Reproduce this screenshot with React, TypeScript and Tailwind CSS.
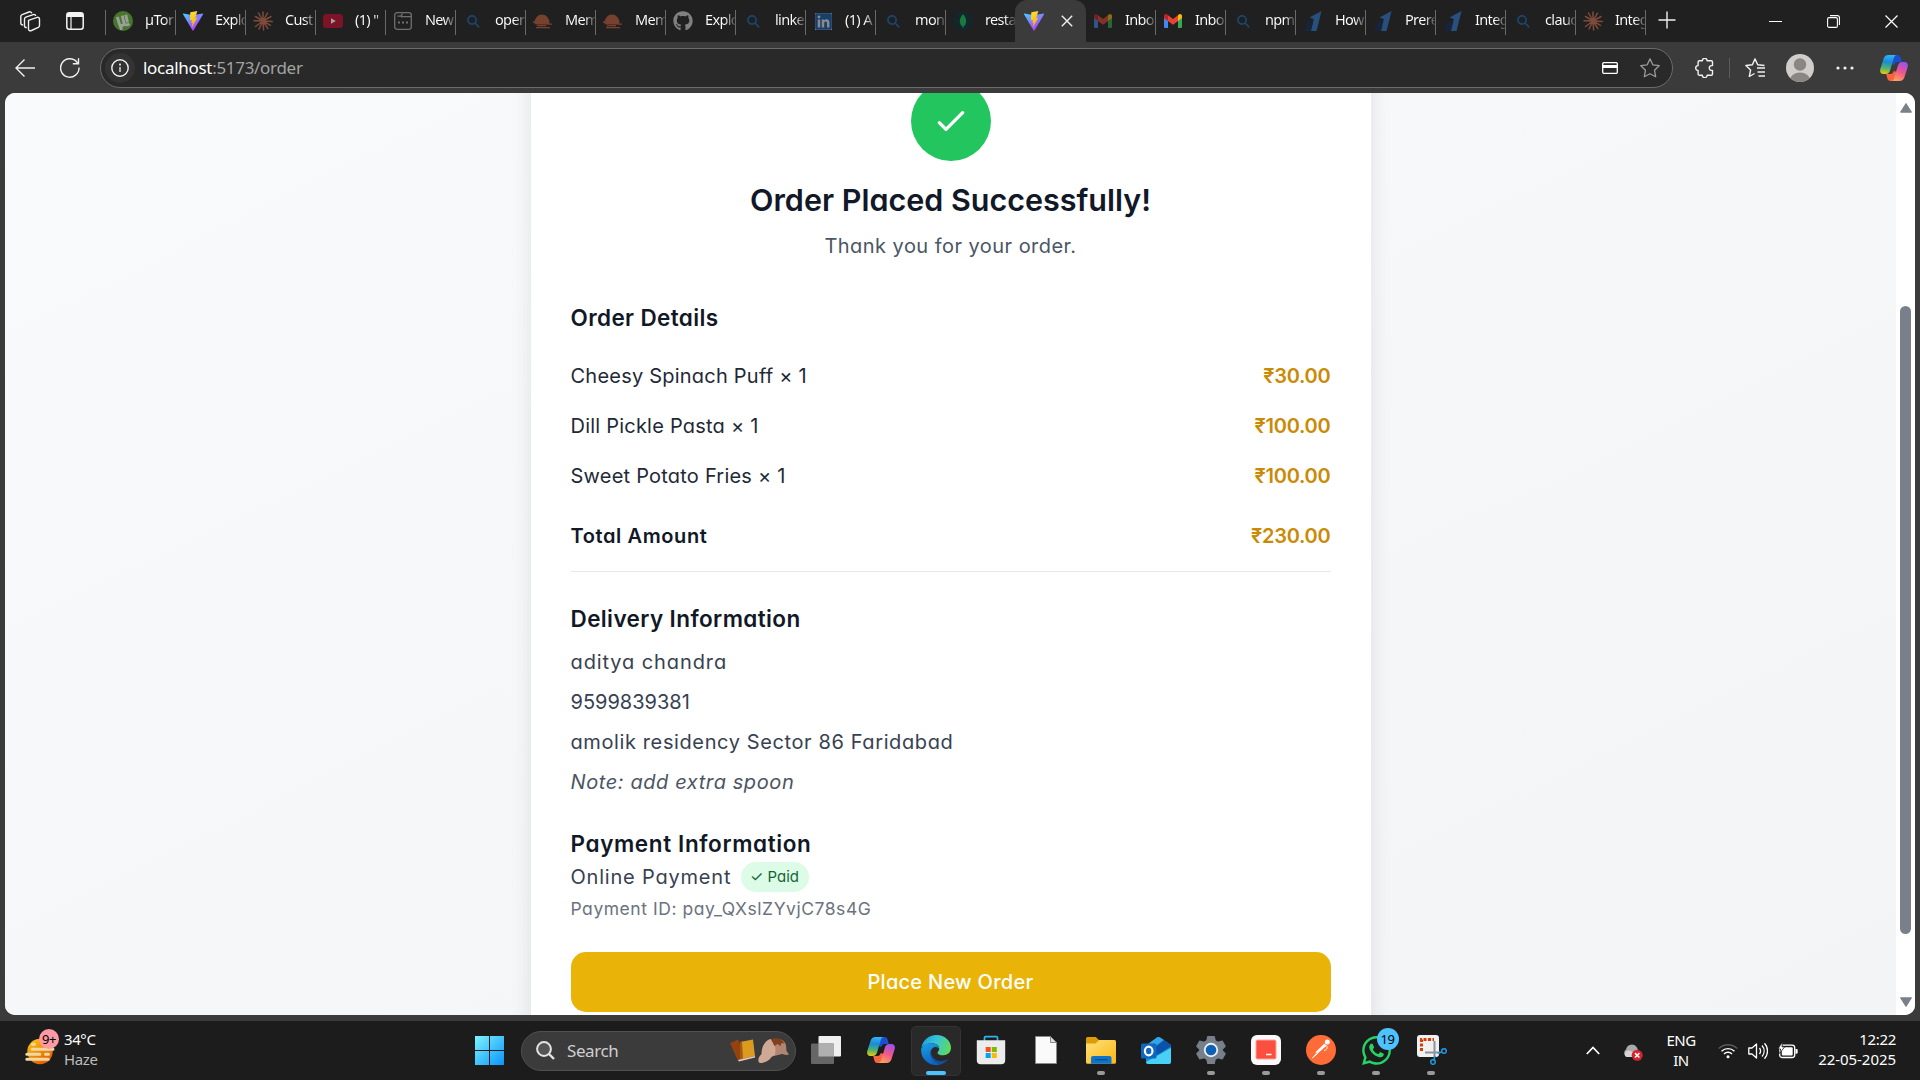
import type { ReactNode } from "react";
import { FaGithub, FaLinkedin, FaWhatsapp } from "react-icons/fa";

/* ---------- browser icons ---------- */

function ViteIcon({ id }: { id: string }) {
  return (
    <svg width="20" height="20" viewBox="0 0 20 20">
      <defs>
        <linearGradient id={`${id}-a`} x1="0" y1="0" x2="0.6" y2="1">
          <stop offset="0" stopColor="#41d1ff" />
          <stop offset="1" stopColor="#bd34fe" />
        </linearGradient>
        <linearGradient id={`${id}-b`} x1="0.4" y1="0" x2="0.6" y2="1">
          <stop offset="0" stopColor="#ffdd35" />
          <stop offset="1" stopColor="#ffa800" />
        </linearGradient>
      </defs>
      <path d="M.4 2.6 10 4.3l9.6-1.7a.5.5 0 0 1 .4.8L10.4 19.6a.5.5 0 0 1-.8 0L0 3.3a.5.5 0 0 1 .4-.7Z" fill={`url(#${id}-a)`} />
      <path d="m14.3 0-6.8 1.3a.3.3 0 0 0-.2.3L6.900 9.300l2-.3-.6 2.800 1.300-.4-.9 5.300 5.600-9.900-2.100.4Z" fill={`url(#${id}-b)`} />
    </svg>
  );
}

function TorrentIcon() {
  return (
    <svg width="20" height="20" viewBox="0 0 20 20">
      <circle cx="10" cy="10" r="10" fill="#46752b" />
      <path d="M4.300 5.800 6.500 13.200c.8 2.200 4.800 1.500 4.500-1L9.300 4.600M11 12.500c1.200 2 4 1.500 5.500.300M14.500 11.500 12.800 3.800M6.800 13.500l1.800 5.200" fill="none" stroke="#9a9f9a" strokeWidth="2.900" />
    </svg>
  );
}

function BurstIcon() {
  return (
    <svg width="20" height="20" viewBox="0 0 20 20" stroke="#7e4b3b" strokeWidth="1.500" strokeLinecap="round">
      <path d="M10 10V1M10 10l4.500-7.800M10 10l8-4.500M10 10l9.200.6M10 10l7.500 4.300M10 10l4.800 7.500M10 10l.6 9M10 10l-4 8M10 10l-7.500 5.500M10 10l-9-.2M10 10 2.500 5.500M10 10 5.500 2" />
    </svg>
  );
}

function YoutubeIcon() {
  return (
    <svg width="20" height="14" viewBox="0 0 20 14">
      <rect width="20" height="14" rx="3.500" fill="#7d1327" />
      <path d="m8 4.200 4.800 2.800L8 9.800Z" fill="#a3a3a3" />
    </svg>
  );
}

function NewsIcon() {
  return (
    <svg width="18" height="18" viewBox="0 0 18 18" fill="none" stroke="#6f6f6f" strokeWidth="1.300">
      <rect x=".7" y=".7" width="16.600" height="16.600" rx="2.500" />
      <path d="M3.500 4.200H7l1.500-2.500M7 5l1.500-.400h8.800" />
      <path d="M4 10.500h2M8 10.500h2M12 10.500h2" strokeWidth="2" />
    </svg>
  );
}

function LensIcon() {
  return (
    <svg width="13" height="13" viewBox="0 0 13 13" fill="none" stroke="#1b466c" strokeWidth="1.700">
      <circle cx="5" cy="5" r="4.100" />
      <path d="m8 8 4.300 4.300" />
    </svg>
  );
}

function SunsetIcon() {
  return (
    <svg width="20" height="16" viewBox="0 0 20 16" fill="#78402f">
      <path d="M1.500 10a7.500 8.500 0 1 1 15 0l-1 1.500H2.500Z" />
      <path d="M0 8.500h6v1.500H0zM12 10h2v1.300h-2zM15 10.500h4v1.300h-4zM4 12h9v1.200H4zM3 14h14v1.200H3z" />
    </svg>
  );
}

function LeafIcon() {
  return (
    <svg width="20" height="20" viewBox="0 0 20 20">
      <circle cx="10" cy="10" r="10" fill="#14252b" />
      <path d="M10 3c2 2.500 3.200 4.500 3.200 7 0 2.700-1.200 4.600-2.800 5.700V17h-.8v-1.300C8 14.600 6.800 12.700 6.800 10c0-2.500 1.200-4.500 3.200-7Z" fill="#177a3e" />
    </svg>
  );
}

function GmailIcon({ dim = false }: { dim?: boolean }) {
  return (
    <svg width="18" height="14" viewBox="0 0 18 14" className={dim ? "opacity-50" : ""}>
      <path d="M0 3.500v9.200c0 .7.600 1.300 1.300 1.300H4V5Z" fill="#4285f4" />
      <path d="M18 3.500v9.200c0 .7-.6 1.300-1.300 1.300H14V5Z" fill="#34a853" />
      <path d="M14 1.200V7l4-3V2.200C18 .2 15.900-.6 14.500.7Z" fill="#fbbc04" />
      <path d="M4 1.200V7L0 4V2.200C0 .2 2.100-.6 3.500.7Z" fill="#c5221f" />
      <path d="M4 7V1.200l5 3.700 5-3.700V7l-5 3.800Z" fill="#ea4335" />
    </svg>
  );
}

function OneIcon() {
  return (
    <svg width="18" height="20" viewBox="0 0 18 20">
      <path d="M5.500 6.500 17.500 0 12.500 20H7L9.800 8Z" fill="#28507f" />
      <path d="M3 11.500 9 10 6.800 20H0Z" fill="#17243a" />
    </svg>
  );
}

function CopilotIcon({ id }: { id: string }) {
  return (
    <svg width="28" height="26" viewBox="0 0 28 26">
      <defs>
        <linearGradient id={`${id}-l`} x1="0.4" y1="0" x2="0.3" y2="1">
          <stop offset="0" stopColor="#2fb4f5" />
          <stop offset=".35" stopColor="#1b8bd6" />
          <stop offset=".7" stopColor="#4fb56b" />
          <stop offset="1" stopColor="#f2c80f" />
        </linearGradient>
        <linearGradient id={`${id}-r`} x1="0.7" y1="0" x2="0.3" y2="1">
          <stop offset="0" stopColor="#9b52ea" />
          <stop offset=".5" stopColor="#f0568c" />
          <stop offset="1" stopColor="#ffa35c" />
        </linearGradient>
      </defs>
      <path d="M14 0h3.500c2 0 2.800 1.300 3.200 2.800L21.800 7h-4c-2 0-3 1-3.600 3L11 9Z" fill="#1a4fd0" />
      <path d="M14 26h-3.500c-2 0-2.800-1.300-3.200-2.800L6.200 19h4c2 0 3-1 3.600-3L17 17Z" fill="#f5663c" />
      <path d="M8.500 0H17c-1.700 0-2.600 1.200-3.200 3L10.200 15c-.8 2.700-2 4-4.500 4H3.500C.6 19-.3 16.800.3 14L3.500 4C4.300 1.300 5.800 0 8.500 0Z" fill={`url(#${id}-l)`} />
      <path d="M19.500 26H11c1.700 0 2.600-1.200 3.200-3L17.800 11c.8-2.700 2-4 4.500-4h2.200c2.900 0 3.800 2.200 3.200 5l-3.200 10c-.8 2.700-2.300 4-5 4Z" fill={`url(#${id}-r)`} />
    </svg>
  );
}

/* ---------- tab strip ---------- */

type TabInfo = { title: string; icon: ReactNode; divider?: boolean };

const leftTabs: TabInfo[] = [
  { title: "µTor", icon: <TorrentIcon /> },
  { title: "Explo", icon: <ViteIcon id="tab-vite" /> },
  { title: "Cust", icon: <BurstIcon /> },
  { title: '(1) "', icon: <YoutubeIcon /> },
  { title: "New", icon: <NewsIcon /> },
  { title: "oper", icon: <LensIcon /> },
  { title: "Mem", icon: <SunsetIcon /> },
  { title: "Mem", icon: <SunsetIcon /> },
  { title: "Explo", icon: <FaGithub size={20} color="#808080" /> },
  { title: "linke", icon: <LensIcon /> },
  {
    title: "(1) A",
    icon: (
      <span className="bg-[#8a8a8a]">
        <FaLinkedin size={19} color="#173f6b" className="-m-px" />
      </span>
    ),
  },
  { title: "mon", icon: <LensIcon /> },
  { title: "resta", icon: <LeafIcon /> },
];

const rightTabs: TabInfo[] = [
  { title: "Inbo", icon: <GmailIcon dim />, divider: false },
  { title: "Inbo", icon: <GmailIcon /> },
  { title: "npm", icon: <LensIcon /> },
  { title: "How", icon: <OneIcon /> },
  { title: "Prere", icon: <OneIcon /> },
  { title: "Integ", icon: <OneIcon /> },
  { title: "clauc", icon: <LensIcon /> },
  { title: "Integ", icon: <BurstIcon /> },
];

function Tab({ title, icon, divider = true }: TabInfo) {
  return (
    <div className="flex h-[42px] w-[70px] shrink-0 items-center">
      <span className={divider ? "mt-[2px] h-[25px] w-px bg-[#6a6a6a]" : "h-[25px] w-px"} />
      <span className="ml-[7px] flex w-5 shrink-0 justify-center">{icon}</span>
      <span className="mb-[3px] ml-[12px] w-[30px] overflow-hidden bg-linear-to-r from-white from-65% to-[#444] bg-clip-text text-[14.500px] tracking-[-0.65px] whitespace-nowrap text-transparent">
        {title}
      </span>
    </div>
  );
}

function TabStrip() {
  return (
    <div className="flex h-[42px] items-center bg-[#202020]">
      <div className="flex w-[105px] shrink-0 items-center">
        <svg className="ml-5" width="21" height="21" viewBox="0 0 21 21" fill="none" stroke="#f0f0f0" strokeWidth="1.400" strokeLinejoin="round">
          <path d="m8.500 9.300 8.700-2.900c1-.3 2.300.2 2.300 1.500v6.600c0 .8-.4 1.400-1.200 1.800l-6.800 3.200c-1.600.7-3 0-3-1.500Z" />
          <path d="M6.800 16.500c-1.500.2-2.300-.5-2.300-1.800V8c0-.8.5-1.500 1.300-1.800l7.400-2.600c1.200-.4 2.300 0 2.500 1.400" />
          <path d="M3.200 14C1.700 14 .8 13.300.8 12V5.500c0-.8.500-1.500 1.300-1.800L9 1c1.400-.5 2.600.1 2.800 1.400" />
        </svg>
        <svg className="ml-[25px]" width="18" height="18" viewBox="0 0 18 18" fill="none" stroke="#f4f4f4" strokeWidth="1.500">
          <rect x=".8" y=".8" width="16.400" height="16.400" rx="2.500" />
          <path d="M1 3h16" strokeWidth="4" />
          <path d="M5 5v12" strokeWidth="1.200" />
        </svg>
      </div>
      {leftTabs.map((tab, i) => (
        <Tab key={i} {...tab} />
      ))}
      <div className="flex h-[42px] w-[71px] shrink-0 items-center rounded-t-[12px] bg-[#3b3b3b]">
        <span className="ml-[9px]">
          <ViteIcon id="active-vite" />
        </span>
        <svg className="ml-[17px]" width="12" height="12" viewBox="0 0 12 12" stroke="#f0f0f0" strokeWidth="1.400">
          <path d="m.8.8 10.400 10.400M11.200.8.8 11.200" />
        </svg>
      </div>
      <div className="-ml-px flex items-center">
        {rightTabs.map((tab, i) => (
          <Tab key={i} {...tab} />
        ))}
      </div>
      <span className="mt-[2px] h-[25px] w-px shrink-0 bg-[#6a6a6a]" />
      <svg className="mb-[3px] ml-[12px]" width="18" height="18" viewBox="0 0 18 18" stroke="#f0f0f0" strokeWidth="1.400">
        <path d="M9 .5v17M.5 9h17" />
      </svg>
      <div className="ml-auto flex items-center pr-[22px]">
        <span className="h-px w-[13px] bg-white" />
        <svg className="ml-[45px]" width="13" height="13" viewBox="0 0 13 13" fill="none" stroke="#fff" strokeWidth="1.100">
          <rect x=".6" y="2.600" width="9.800" height="9.800" rx="1.500" />
          <path d="M3 .6h7.400c1.200 0 2 .8 2 2V10" />
        </svg>
        <svg className="ml-[45px]" width="13" height="13" viewBox="0 0 13 13" stroke="#fff" strokeWidth="1.200">
          <path d="m.5.5 12 12M12.500.5l-12 12" />
        </svg>
      </div>
    </div>
  );
}

/* ---------- address bar ---------- */

function Toolbar() {
  return (
    <div className="flex h-[51px] items-center bg-[#3b3b3b] pt-px">
      <svg className="ml-[15px]" width="20" height="18" viewBox="0 0 20 18" fill="none" stroke="#f0f0f0" strokeWidth="1.400">
        <path d="M20 9H1M9.500.5 1 9l8.500 8.500" />
      </svg>
      <svg className="ml-[25px]" width="20" height="20" viewBox="0 0 20 20" fill="none" stroke="#f0f0f0" strokeWidth="1.400">
        <path d="M19 9.500A9.200 9.200 0 1 1 17 4.200L18.300 5.800" />
        <path d="M18.500.2v5.600h-5.700" />
      </svg>
      <div className="ml-5 flex h-10 w-[1573px] items-center rounded-full border border-[#6b6b6b] bg-[#292929]">
        <span className="ml-1 flex size-[30px] items-center justify-center rounded-full bg-[#333]">
          <svg width="18" height="18" viewBox="0 0 18 18" fill="none" stroke="#f0f0f0" strokeWidth="1.400">
            <circle cx="9" cy="9" r="8.200" />
            <path d="M9 8v5" strokeWidth="1.300" />
            <circle cx="9" cy="5.600" r=".4" />
          </svg>
        </span>
        <span className="ml-[8px] text-[17px] tracking-[-0.3px] text-[#a3a3a3]">
          <span className="text-white">localhost</span>:5173/order
        </span>
        <svg className="ml-auto" width="16" height="12" viewBox="0 0 16 12" fill="none" stroke="#fff">
          <rect x=".7" y=".7" width="14.600" height="10.600" rx="1" strokeWidth="1.300" />
          <path d="M0 4.500h16" strokeWidth="3" />
        </svg>
        <svg className="mr-[12px] ml-[22px]" width="20" height="20" viewBox="0 0 20 20" fill="none" stroke="#9a9a9a" strokeWidth="1.300" strokeLinejoin="round">
          <path d="m10 .9 2.800 5.900 6.400.9-4.700 4.500 1.200 6.600L10 15.700l-5.700 3.100 1.200-6.600L.8 7.700l6.400-.9Z" />
        </svg>
      </div>
      <svg className="ml-[22px]" width="19" height="20" viewBox="0 0 19 20" fill="none" stroke="#f0f0f0" strokeWidth="1.400" strokeLinejoin="round">
        <path d="M7.300 2.800a2.400 2.400 0 0 1 4.800 0h4.200a1.200 1.200 0 0 1 1.200 1.200v3.600h-.8a2.400 2.400 0 0 0 0 4.800h.8v3.600a1.200 1.200 0 0 1-1.200 1.200h-4.200a2.400 2.400 0 0 1-4.800 0H4.300a1.200 1.200 0 0 1-1.200-1.200v-3.600a2.400 2.400 0 0 1 0-4.800V4a1.200 1.200 0 0 1 1.200-1.200Z" />
      </svg>
      <span className="ml-[15px] h-5 w-px bg-[#5c5c5c]" />
      <svg className="ml-[15px]" width="21" height="20" viewBox="0 0 21 20" fill="none" stroke="#f0f0f0" strokeWidth="1.400" strokeLinejoin="round">
        <path d="M9.500 15.500 4.300 18.500l1.300-6.500L.9 7.500l6.500-.8L10 .9l2.700 5.800 6.800.8" />
        <path d="M12 10h8M12.500 14h7.500M13.500 18H20" />
      </svg>
      <svg className="ml-5" width="28" height="28" viewBox="0 0 28 28">
        <clipPath id="avatar-clip">
          <circle cx="14" cy="14" r="14" />
        </clipPath>
        <g clipPath="url(#avatar-clip)">
          <rect width="28" height="28" fill="#d0cdca" />
          <circle cx="14" cy="10.500" r="6.200" fill="#8a8683" />
          <ellipse cx="14" cy="26" rx="10" ry="7.500" fill="#8a8683" />
        </g>
      </svg>
      <svg className="ml-[22px]" width="18" height="4" viewBox="0 0 18 4" fill="#f0f0f0">
        <circle cx="2" cy="2" r="1.600" />
        <circle cx="9" cy="2" r="1.600" />
        <circle cx="16" cy="2" r="1.600" />
      </svg>
      <span className="ml-[26px]">
        <CopilotIcon id="cp-bar" />
      </span>
    </div>
  );
}

/* ---------- order page ---------- */

const items = [
  { name: "Cheesy Spinach Puff × 1", price: "₹30.00" },
  { name: "Dill Pickle Pasta × 1", price: "₹100.00" },
  { name: "Sweet Potato Fries × 1", price: "₹100.00" },
];

function OrderCard() {
  return (
    <div className="mx-auto -mt-[52px] flex h-[1100px] w-[840px] shrink-0 flex-col bg-white px-10 pt-10 font-['Inter','Noto_Sans',sans-serif] text-[20px] leading-[30px] shadow-[0_12px_20px_rgba(0,0,0,0.1)] [font-feature-settings:'cv11']">
      <div className="flex size-20 shrink-0 items-center justify-center self-center rounded-full bg-[#22c55e]">
        <svg width="40" height="40" viewBox="0 0 24 24" fill="none" stroke="#fff" strokeWidth="2" strokeLinecap="round" strokeLinejoin="round">
          <path d="m5 13 4 4L19 7" />
        </svg>
      </div>
      <h1 className="mt-[19px] mb-px text-center text-[30.500px] leading-10 font-semibold tracking-[0px] text-[#111827]">
        Order Placed Successfully!
      </h1>
      <p className="mt-[10px] text-center tracking-[0.46px] text-gray-600">Thank you for your order.</p>

      <h2 className="mt-[42px] text-[22.500px] font-semibold tracking-[0.37px] text-[#111827]">Order Details</h2>
      <div className="mt-7 flex flex-col gap-5">
        {items.map((item) => (
          <div key={item.name} className="flex justify-between">
            <span className="tracking-[0.22px] text-[#1f2937]">{item.name}</span>
            <span className="font-semibold tracking-[-0.25px] text-[#ca8a04]">{item.price}</span>
          </div>
        ))}
      </div>
      <div className="mt-[30px] flex justify-between border-b border-gray-200 pb-5 font-semibold">
        <span className="tracking-[0.6px] text-[#111827]">Total Amount</span>
        <span className="tracking-[-0.25px] text-[#ca8a04]">₹230.00</span>
      </div>

      <h2 className="mt-8 text-[22.500px] font-semibold tracking-[0.39px] text-[#111827]">Delivery Information</h2>
      <div className="mt-[13px] flex flex-col gap-[10px] text-[#374151]">
        <p className="tracking-[0.9px]">aditya chandra</p>
        <p className="tracking-[0px]">9599839381</p>
        <p className="tracking-[0.61px]">amolik residency Sector 86 Faridabad</p>
        <p className="tracking-[0.59px] text-[#4b5563] italic">Note: add extra spoon</p>
      </div>

      <h2 className="mt-8 text-[22.500px] font-semibold tracking-[0.62px] text-[#111827]">Payment Information</h2>
      <div className="mt-[3px] flex items-center text-[#374151]">
        <span className="w-[170px] tracking-[0.8px]">Online Payment</span>
        <span className="flex h-[30px] w-[68px] items-center justify-center rounded-full bg-[#dcfce7] text-[15px] text-[#166534]">
          ✓ Paid
        </span>
      </div>
      <p className="mt-1 text-[17.500px] leading-[26px] tracking-[0.54px] text-[#6b7280]">
        Payment ID: pay_QXslZYvjC78s4G
      </p>
      <button className="mt-[30px] h-[60px] shrink-0 rounded-[15px] bg-[#eab308] font-medium tracking-[0.28px] text-white">
        Place New Order
      </button>
    </div>
  );
}

function Viewport() {
  return (
    <div className="h-[928px] bg-[#3b3b3b] px-[5px] pb-[6px]">
      <div className="flex h-[922px] overflow-hidden rounded-[10px] bg-white">
        <main className="flex flex-1 flex-col overflow-hidden bg-linear-to-br from-gray-50 to-gray-100">
          <OrderCard />
        </main>
        <div className="flex w-[19px] flex-col items-center bg-white">
          <svg className="mt-[10px]" width="12" height="10" viewBox="0 0 12 10" fill="#79808a">
            <path d="M6 .5 11.500 9.200H.5Z" stroke="#79808a" strokeLinejoin="round" />
          </svg>
          <span className="mt-[193px] h-[628px] w-[11px] rounded-full bg-[#79808a]" />
          <svg className="mt-[63px]" width="12" height="10" viewBox="0 0 12 10" fill="#79808a">
            <path d="M6 9.500 11.500.8H.5Z" stroke="#79808a" strokeLinejoin="round" />
          </svg>
        </div>
      </div>
    </div>
  );
}

/* ---------- taskbar ---------- */

function EdgeIcon() {
  return (
    <svg width="30" height="30" viewBox="0 0 30 30">
      <defs>
        <linearGradient id="edge-top" x1="0" y1="0.3" x2="1" y2="0.6">
          <stop offset="0" stopColor="#1f9fe0" />
          <stop offset=".45" stopColor="#35c4d8" />
          <stop offset="1" stopColor="#5fdc5a" />
        </linearGradient>
        <linearGradient id="edge-wave" x1="0.2" y1="0" x2="0.5" y2="1">
          <stop offset="0" stopColor="#1b9de2" />
          <stop offset="1" stopColor="#0b62c4" />
        </linearGradient>
      </defs>
      <path d="M.4 12.500C1.800 5 8 0 15.300 0 24 0 30 6.200 30 12.800c0 4.600-3.600 7.500-7.500 7.500-3.600 0-6-1.200-6-2.600 0-.9 1.700-1.500 1.700-4 0-3-3.200-5.400-7.400-5.400C6 8.300 2.500 10 .4 12.500Z" fill="url(#edge-top)" />
      <path d="M10.400 16.700c0 7 6 10.300 11.500 9.300 2.500-.5 4.200-1.500 5.800-2.500C24.500 28 20 30 15 30l-5-1Z" fill="#134f9e" />
      <path d="M.2 13.500C2 9.500 6.500 7.800 10.800 8.300c4.500.4 7.500 2.800 7.400 5.800-.6-1.300-2-2-3.500-2-2.700 0-5.200 2.600-5.200 6.400 0 5.500 4.500 9.800 9.500 10.900C17.800 29.800 16.500 30 15 30 6.500 30-.8 23 .2 13.500Z" fill="url(#edge-wave)" />
    </svg>
  );
}

function StoreIcon() {
  return (
    <svg width="30" height="30" viewBox="0 0 30 30">
      <path d="M8.500 6V2.800c0-.6.500-1.100 1.100-1.100h10.800c.6 0 1.100.5 1.100 1.100V6" fill="none" stroke="#2bb5e9" strokeWidth="1.700" />
      <path d="M.8 5.300h28.400v20a4 4 0 0 1-4 4H4.800a4 4 0 0 1-4-4Z" fill="#ececec" />
      <path d="M9.700 12h5v5h-5z" fill="#f25022" />
      <path d="M15.800 12h5v5h-5z" fill="#7fba00" />
      <path d="M9.700 18h5v5h-5z" fill="#00a4ef" />
      <path d="M15.800 18h5v5h-5z" fill="#ffb900" />
    </svg>
  );
}

function DocumentIcon() {
  return (
    <svg width="22" height="28" viewBox="0 0 22 28">
      <path d="M.5.5h15l6 6v21H.5Z" fill="#fafafa" stroke="#8a8a8a" />
      <path d="M15.500.5v6h6Z" fill="#e2e2e2" stroke="#8a8a8a" />
    </svg>
  );
}

function FolderIcon() {
  return (
    <svg width="30" height="30" viewBox="0 0 30 30">
      <defs>
        <linearGradient id="folder" x1="0" y1="0" x2="1" y2="1">
          <stop offset="0" stopColor="#ffe07a" />
          <stop offset="1" stopColor="#fbb812" />
        </linearGradient>
      </defs>
      <path d="M0 3.500A1.500 1.500 0 0 1 1.500 2h8.300l3.200 3v5H0Z" fill="#dc9c05" />
      <path d="M0 8.500h9.500L13 5h15.500A1.500 1.500 0 0 1 30 6.500v20.800a1.500 1.500 0 0 1-1.500 1.500h-27A1.500 1.500 0 0 1 0 27.300Z" fill="url(#folder)" />
      <path d="M5 28.800V23a2 2 0 0 1 2-2h16.500a2 2 0 0 1 2 2v5.800Z" fill="#0f74c9" />
      <path d="M9 24.700h12.500" stroke="#0a4d8f" strokeWidth="1.300" />
    </svg>
  );
}

function OutlookIcon() {
  return (
    <svg width="30" height="28" viewBox="0 0 30 28">
      <path d="M5 9.500 16 1.500c1-.7 2-.7 3 0L30 9v16.500a2.500 2.500 0 0 1-2.500 2.500h-20A2.500 2.500 0 0 1 5 25.500Z" fill="#1490df" />
      <path d="m5 9.500 11-8c1-.7 2-.7 3 0L23 4 8 14Z" fill="#32a5e8" />
      <path d="M30 10.500 16 19l-4-6L23 4l7 5Z" fill="#0c52a8" />
      <path d="M30 12v13.500a2.500 2.500 0 0 1-2.500 2.500h-20C6 28 5 27 5 26Z" fill="#4ad0f5" />
      <rect y="7.500" width="15.500" height="15" rx="1.500" fill="#0f67c2" />
      <ellipse cx="7.700" cy="15" rx="3.800" ry="4.300" fill="none" stroke="#fff" strokeWidth="2.200" />
    </svg>
  );
}

function SettingsIcon() {
  return (
    <svg width="30" height="30" viewBox="0 0 30 30">
      <path
        d="M11.800 1.500h6.400l1 4.200 2.800 1.600 4.200-1.300 3 5.300-3 3v1.400l3 3-3 5.300-4.200-1.300-2.800 1.600-1 4.200h-6.400l-1-4.200L8 22.700 3.800 24l-3-5.300 3-3v-1.400l-3-3L3.800 6 8 7.300l2.800-1.600Z"
        fill="#77808a"
        stroke="#77808a"
        strokeWidth="1.200"
        strokeLinejoin="round"
      />
      <circle cx="15" cy="15" r="7.200" fill="#e8edf2" />
      <circle cx="15" cy="15" r="5.300" fill="#0e60b4" />
    </svg>
  );
}

function RedAppIcon() {
  return (
    <svg width="30" height="30" viewBox="0 0 30 30">
      <rect width="30" height="30" rx="6" fill="#fafafa" />
      <rect x="5" y="5" width="20" height="19" rx="1.500" fill="#fb4f3f" stroke="#fda49b" />
      <path d="M15 19.500h5.500" stroke="#fff" strokeWidth="1.500" />
    </svg>
  );
}

function PostmanIcon() {
  return (
    <svg width="30" height="30" viewBox="0 0 30 30">
      <circle cx="15" cy="15" r="15" fill="#ff6c37" />
      <circle cx="21.300" cy="7" r="2.500" fill="#fff" />
      <path d="m18.500 8.500 2 2.200-8.300 7.300-3-.5ZM6 23l4-4.500 2.500-.5Z" fill="#fff" />
      <path d="M20.500 10.500c1.500 2 .3 4.500-2.500 5M6 23.200l6-5" stroke="#fff" fill="none" />
    </svg>
  );
}

function WhatsappIcon() {
  return (
    <span className="relative mt-px">
      <FaWhatsapp size={33} color="#25d366" />
      <span className="absolute -top-[6px] left-[17px] flex size-[22px] items-center justify-center rounded-full bg-[#4cc2ff] text-[13px] tracking-[-0.5px] text-black">
        19
      </span>
    </span>
  );
}

function SnipIcon() {
  return (
    <svg className="ml-px" width="30" height="30" viewBox="0 0 30 30" fill="none">
      <rect width="22" height="22" rx="3" fill="#f0f0f0" />
      <path d="M4.500 16V4.500H17" stroke="#d83b01" strokeWidth="3" strokeDasharray="3 1.500" />
      <path d="M17.500 6v16M8 17.500h15" stroke="#8b9299" strokeWidth="2" />
      <circle cx="27" cy="16" r="2.300" stroke="#1d9be2" strokeWidth="1.500" />
      <circle cx="16" cy="27" r="2.300" stroke="#1d9be2" strokeWidth="1.500" />
      <path d="m24.700 17-4 1.300M17 24.700l1-4" stroke="#1d9be2" strokeWidth="1.500" />
    </svg>
  );
}

function TaskViewIcon() {
  return (
    <svg width="30" height="28" viewBox="0 0 30 28">
      <rect x="7.500" width="22.500" height="20.500" rx="1" fill="#f0f0f0" />
      <rect y="7.500" width="23" height="20.500" rx="1" fill="#666" />
      <rect x="7.500" y="7.500" width="15.500" height="13" fill="#b0b0b0" />
    </svg>
  );
}

type TaskApp = { name: string; icon: ReactNode; state?: "active" | "running" };

const apps: TaskApp[] = [
  { name: "task-view", icon: <TaskViewIcon /> },
  { name: "copilot", icon: <CopilotIcon id="cp-task" /> },
  { name: "edge", icon: <EdgeIcon />, state: "active" },
  { name: "store", icon: <StoreIcon /> },
  { name: "document", icon: <DocumentIcon /> },
  { name: "explorer", icon: <FolderIcon />, state: "running" },
  { name: "outlook", icon: <OutlookIcon /> },
  { name: "settings", icon: <SettingsIcon />, state: "running" },
  { name: "remote", icon: <RedAppIcon />, state: "running" },
  { name: "postman", icon: <PostmanIcon />, state: "running" },
  { name: "whatsapp", icon: <WhatsappIcon />, state: "running" },
  { name: "snip", icon: <SnipIcon />, state: "running" },
];

function AppCell({ icon, state }: TaskApp) {
  return (
    <div className="flex w-[55px] shrink-0 justify-center">
      <div
        className={
          state === "active"
            ? "flex h-[50px] w-[50px] flex-col items-center rounded-[5px] border border-[#333] bg-[#292929]"
            : "flex h-[50px] w-[50px] flex-col items-center border border-transparent"
        }
      >
        <span className="mt-[2px] flex h-[42px] items-center">{icon}</span>
        {state === "active" && <span className="h-1 w-5 shrink-0 rounded-full bg-[#4cc2ff]" />}
        {state === "running" && <span className="h-1 w-2 shrink-0 rounded-full bg-[#9a9a9a]" />}
      </div>
    </div>
  );
}

function Taskbar() {
  return (
    <div className="flex h-[59px] items-center bg-[#1c1c1c] text-[15px] leading-5 text-white">
      <div className="flex w-[475px] shrink-0 items-center pb-[3px]">
        <div className="relative ml-[25px]">
          <svg width="30" height="34" viewBox="0 0 30 34">
            <defs>
              <linearGradient id="sun" x1="0" y1="0" x2="0.6" y2="1">
                <stop offset="0" stopColor="#ffcb05" />
                <stop offset="1" stopColor="#e85d04" />
              </linearGradient>
            </defs>
            <circle cx="15" cy="19.500" r="12.700" fill="url(#sun)" />
            <path d="M7.500 12.200h2M7 17.200h21M1.800 22.200h13M20.500 22.200h3M1.800 27.200h21.500" stroke="#ecd9a4" strokeWidth="3" strokeLinecap="round" />
          </svg>
          <span className="absolute -top-[3px] left-[14px] flex size-5 items-center justify-center rounded-full bg-[#ff99a4] text-[13px] tracking-[-0.4px] text-black">
            9+
          </span>
        </div>
        <div className="ml-[9px] tracking-[-0.4px]">
          <div>34°C</div>
          <div className="text-[#bdbdbd]">Haze</div>
        </div>
      </div>
      <svg width="29" height="29" viewBox="0 0 29 29">
        <defs>
          <linearGradient id="start" x1="0" y1="0" x2="1" y2="1">
            <stop offset="0" stopColor="#7df3ff" />
            <stop offset="1" stopColor="#0a94fa" />
          </linearGradient>
        </defs>
        <path d="M0 0h14v14H0zM15 0h14v14H15zM0 15h14v14H0zM15 15h14v14H15z" fill="url(#start)" />
      </svg>
      <div className="ml-[17px] flex h-10 w-[275px] shrink-0 items-center rounded-full border border-[#505050] bg-[#3b3b3b]">
        <svg className="ml-[14px]" width="19" height="19" viewBox="0 0 19 19" fill="none" stroke="#e4e4e4" strokeWidth="2">
          <circle cx="8" cy="8" r="6.900" fill="#555" />
          <path d="m13 13 5 5" strokeWidth="2.400" />
        </svg>
        <span className="ml-[12px] text-[17px] tracking-[-0.4px] text-[#cfcfcf]">Search</span>
        <svg className="mr-[6px] ml-auto" width="60" height="26" viewBox="0 0 60 26">
          <path d="m1 5 8-3.500L17 20l-8 3Z" fill="#96420f" />
          <path d="m11 4 13-2.500 2 16.500-15 3.500Z" fill="#dc9a1f" />
          <path d="m11 4 2-.4 1 17-3 1Z" fill="#a55c10" />
          <path d="m9 22 17-4v1.500L10 23.500Z" fill="#e5c9c4" />
          <path d="M44 4c5-4 11-3 13 3l.5 6 2.500 3.500-3 .5-4-1-8 2Z" fill="#b18571" />
          <path d="M32.500 16c0-8 4-13.500 9-15 4 2 6 9 4.500 16l-3.500 2c-2 3.500-7 6-11 6-3.500-.5-2.500-6 1-9Z" fill="#cfa994" />
          <path d="M42 1.500c4-2.500 11-1.500 13.500 4l-3-.5-1 3-3-2-3 2Z" fill="#83401c" />
        </svg>
      </div>
      <div className="ml-[2.500px] flex">
        {apps.map((app) => (
          <AppCell key={app.name} {...app} />
        ))}
      </div>
      <div className="ml-auto flex shrink-0 items-center pr-6">
        <svg width="14" height="9" viewBox="0 0 14 9" fill="none" stroke="#fff" strokeWidth="1.700">
          <path d="m.8 8 6.200-6.500L13.200 8" />
        </svg>
        <svg className="mt-[3px] ml-[23px]" width="20" height="17" viewBox="0 0 20 17">
          <path d="M3.500 12.500A4 4 0 0 1 3 5.500 6 6 0 0 1 14 3.500l2 5-6 4Z" fill="#a9a9a9" />
          <path d="M3.500 13a3.500 3.500 0 0 1 1-6.500c3-.5 4 .5 7 3v3.500Z" fill="#d5d5d5" />
          <circle cx="14.200" cy="11.300" r="5.500" fill="#d8232f" />
          <path d="m12 9.100 4.400 4.400M16.400 9.100 12 13.500" stroke="#fff" strokeWidth="1.500" />
        </svg>
        <div className="ml-[23px] w-[30px] pb-[2px] text-center tracking-[-0.5px]">
          <div>ENG</div>
          <div>IN</div>
        </div>
        <svg className="ml-[22px]" width="20" height="16" viewBox="0 0 20 16" fill="none" stroke="#fff" strokeWidth="1.400">
          <path d="M.8 5.500a13 13 0 0 1 18.400 0" stroke="#5a5a5a" />
          <path d="M3.500 8.300a9.200 9.200 0 0 1 13 0M6 11a5.600 5.600 0 0 1 8 0" />
          <circle cx="10" cy="13.800" r="1.500" fill="#fff" stroke="none" />
        </svg>
        <svg className="ml-[10px]" width="20" height="18" viewBox="0 0 20 18" fill="none" stroke="#fff" strokeWidth="1.300" strokeLinejoin="round">
          <path d="M.8 6v6h3.200l4.500 4V2L4 6Z" />
          <path d="M11.500 6c1.300 1.800 1.300 4.200 0 6M14 3.500c2.800 3.300 2.800 7.700 0 11M16.500 1.300c4 4.500 4 10.900 0 15.400" />
        </svg>
        <svg className="ml-[10px]" width="20" height="17" viewBox="0 0 20 17">
          <rect x="1.700" y="3.200" width="15" height="12.300" rx="2.500" fill="none" stroke="#fff" strokeWidth="1.300" />
          <rect x="3.800" y="5.300" width="10.900" height="8.200" rx="1" fill="#fff" />
          <path d="M17.500 7h1c.8 0 1.200.4 1.200 1.200v2.400c0 .8-.4 1.200-1.200 1.200h-1Z" fill="#fff" />
          <path d="M4.500-.3 0 7h2.600l-1 4.500L6.700 4.800H4Z" fill="#fff" stroke="#1c1c1c" strokeWidth=".8" />
        </svg>
        <div className="ml-5 w-[78px] pb-[3px] text-right">
          <div className="tracking-[-0.3px]">12:22</div>
          <div className="tracking-[-0.05px]">22-05-2025</div>
        </div>
      </div>
    </div>
  );
}

export default function App() {
  return (
    <div className="flex h-[1080px] w-[1920px] flex-col overflow-hidden bg-[#1c1c1c] font-['Noto_Sans',sans-serif]">
      <TabStrip />
      <Toolbar />
      <Viewport />
      <Taskbar />
    </div>
  );
}
